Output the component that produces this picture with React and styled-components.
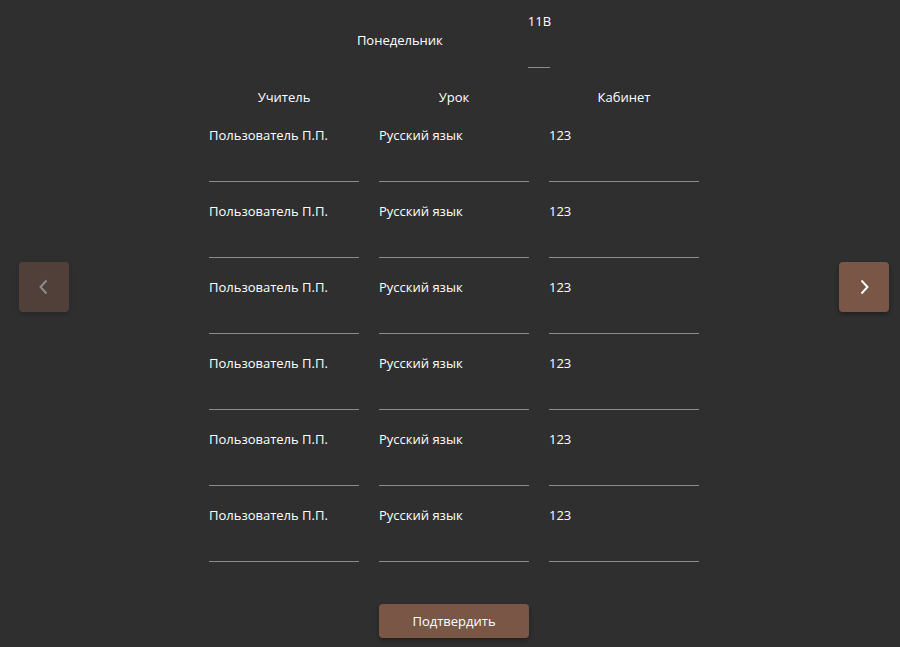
import styled, { createGlobalStyle } from 'styled-components';

const rows = Array.from({ length: 6 }, (_, i) => ({
    id: i,
    teacher: 'Пользователь П.П.',
    lesson: 'Русский язык',
    room: '123'
}));

export default function App() {
    return (
        <>
            <GlobalStyle />
            <Page>
                <NavButton $disabled aria-label="Назад">
                    <Chevron dir="left" />
                </NavButton>
                <Main>
                    <HeaderRow>
                        <DayTitle>Понедельник</DayTitle>
                        <ClassBlock>
                            <span>11В</span>
                            <ClassLine />
                        </ClassBlock>
                    </HeaderRow>

                    <Table>
                        <HeadCell>Учитель</HeadCell>
                        <HeadCell>Урок</HeadCell>
                        <HeadCell>Кабинет</HeadCell>
                        {rows.map(row => (
                            <Row key={row.id}>
                                <Cell>{row.teacher}</Cell>
                                <Cell>{row.lesson}</Cell>
                                <Cell>{row.room}</Cell>
                            </Row>
                        ))}
                    </Table>

                    <SubmitButton>Подтвердить</SubmitButton>
                </Main>
                <NavButton aria-label="Вперёд">
                    <Chevron dir="right" />
                </NavButton>
            </Page>
        </>
    );
}

function Chevron({ dir }) {
    return (
        <svg width="16" height="16" viewBox="0 0 16 16" fill="none">
            <path
                d={dir === 'left' ? 'M10.5 1.5 L4.5 8 L10.5 14.5' : 'M5.5 1.5 L11.5 8 L5.5 14.5'}
                stroke="#FFFFFF"
                strokeWidth="1.9"
            />
        </svg>
    );
}

const GlobalStyle = createGlobalStyle`
    body {
        margin: 0;
        background-color: #2F2F2F;
        font-family: "Open Sans", "Noto Sans", sans-serif;
        color: #FFFFFF;
        -webkit-font-smoothing: antialiased;
    }
`;

const Page = styled.div`
    display: flex;
    align-items: flex-start;
    min-height: 100vh;
    padding: 0 11px 0 19px;
    box-sizing: border-box;
`;

const NavButton = styled.button`
    flex: 0 0 50px;
    width: 50px;
    height: 50px;
    margin-top: 262px;
    border: none;
    border-radius: 4px;
    background-color: #7A5646;
    opacity: ${props => props.$disabled ? 0.45 : 1};
    box-shadow: 0 2px 4px rgba(0, 0, 0, 0.35);
    display: flex;
    justify-content: center;
    align-items: center;
    padding: 0;
    cursor: ${props => props.$disabled ? 'default' : 'pointer'};
`;

const Main = styled.div`
    flex: 1;
    display: flex;
    flex-direction: column;
    align-items: center;
    padding-top: 12px;
`;

const HeaderRow = styled.div`
    display: flex;
    align-items: center;
    gap: 85px;
    font-size: 13px;
    font-weight: 500;
`;

const DayTitle = styled.div`
    line-height: 18px;
`;

const ClassBlock = styled.div`
    display: flex;
    flex-direction: column;
    align-items: center;
    line-height: 18px;
`;

const ClassLine = styled.div`
    width: 22px;
    height: 1px;
    margin-top: 37px;
    background-color: #8C8C8C;
`;

const Table = styled.div`
    display: grid;
    grid-template-columns: repeat(3, 150px);
    column-gap: 20px;
    margin-top: 20px;
    font-size: 13px;
    font-weight: 500;
`;

const HeadCell = styled.div`
    text-align: center;
    line-height: 18px;
    margin-bottom: 21px;
`;

const Row = styled.div`
    display: contents;
`;

const Cell = styled.div`
    height: 54px;
    line-height: 16px;
    border-bottom: 1px solid #8C8C8C;
    margin-bottom: 21px;
`;

const SubmitButton = styled.button`
    margin-top: 21px;
    width: 150px;
    height: 34px;
    border: none;
    border-radius: 4px;
    background-color: #7A5646;
    color: #FFFFFF;
    font-family: "Open Sans", "Noto Sans", sans-serif;
    font-size: 13px;
    font-weight: 500;
    box-shadow: 0 2px 4px rgba(0, 0, 0, 0.35);
    cursor: pointer;
`;
